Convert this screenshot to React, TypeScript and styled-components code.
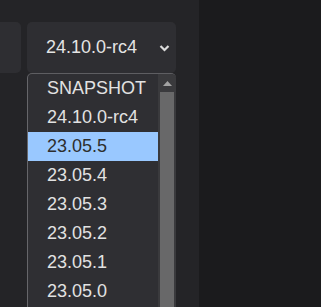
import styled, { createGlobalStyle } from 'styled-components';

const versions = [
  'SNAPSHOT',
  '24.10.0-rc4',
  '23.05.5',
  '23.05.4',
  '23.05.3',
  '23.05.2',
  '23.05.1',
  '23.05.0',
];

const App = () => {
  return (
    <>
      <GlobalStyle />
      <Page>
        <Panel>
          <Toolbar>
            <StubCard />
            <SelectWrap>
              <SelectBox>
                <span>24.10.0-rc4</span>
                <svg width="11" height="8" viewBox="0 0 11 8">
                  <polyline
                    points="1.5,2 5.5,6 9.5,2"
                    fill="none"
                    stroke="#dcdcdc"
                    strokeWidth="2.2"
                  />
                </svg>
              </SelectBox>
              <Dropdown>
                <Options>
                  {versions.map((v) => (
                    <Option key={v} selected={v === '23.05.5'}>
                      {v}
                    </Option>
                  ))}
                </Options>
                <Scrollbar>
                  <svg width="9" height="5" viewBox="0 0 9 5">
                    <polygon points="0,5 4.5,0 9,5" fill="#a3a3a3" />
                  </svg>
                  <Thumb />
                </Scrollbar>
              </Dropdown>
            </SelectWrap>
          </Toolbar>
        </Panel>
        <Aside />
      </Page>
    </>
  );
};

const GlobalStyle = createGlobalStyle`
  body {
    margin: 0;
    background: #1b1b1d;
    font-family: "Liberation Sans", Arial, sans-serif;
  }
`;

const Page = styled.div`
  display: flex;
  width: 321px;
  height: 307px;
  overflow: hidden;
`;

const Panel = styled.div`
  width: 199px;
  background: #242427;
`;

const Aside = styled.div`
  flex: 1;
  background: #1b1b1d;
`;

const Toolbar = styled.div`
  display: flex;
  gap: 6px;
  padding-top: 22px;
`;

const StubCard = styled.div`
  width: 21px;
  height: 51px;
  background: #2e2e32;
  border-radius: 0 5px 5px 0;
`;

const SelectWrap = styled.div`
  position: relative;
  width: 149px;
`;

const SelectBox = styled.div`
  display: flex;
  align-items: center;
  justify-content: space-between;
  height: 51px;
  padding: 0 6px 0 19px;
  box-sizing: border-box;
  background: #2e2e32;
  border-radius: 5px;
  color: #e4e4e4;
  font-size: 18px;

  svg {
    margin-top: 1px;
  }
`;

const Dropdown = styled.div`
  position: absolute;
  top: 51px;
  left: 0;
  width: 149px;
  height: 234px;
  display: flex;
  box-sizing: border-box;
  background: #2f2f33;
  border-top: 1px solid #5e5e62;
  border-left: 1px solid #66666a;
  border-radius: 5px 5px 0 0;
  overflow: hidden;
`;

const Options = styled.div`
  width: 130px;
  display: flex;
  flex-direction: column;
`;

const Option = styled.div<{ selected?: boolean }>`
  height: 29px;
  flex-shrink: 0;
  display: flex;
  align-items: center;
  padding-left: 19px;
  font-size: 18px;
  color: ${(p) => (p.selected ? '#2e2e2e' : '#e2e2e2')};
  background: ${(p) => (p.selected ? '#99c8ff' : 'transparent')};
`;

const Scrollbar = styled.div`
  flex: 1;
  display: flex;
  flex-direction: column;
  align-items: center;
  background: #3a3a3d;
  padding-top: 7px;

  svg {
    margin-bottom: 6px;
  }
`;

const Thumb = styled.div`
  width: 14px;
  flex: 1;
  background: #686869;
`;

export default App;
